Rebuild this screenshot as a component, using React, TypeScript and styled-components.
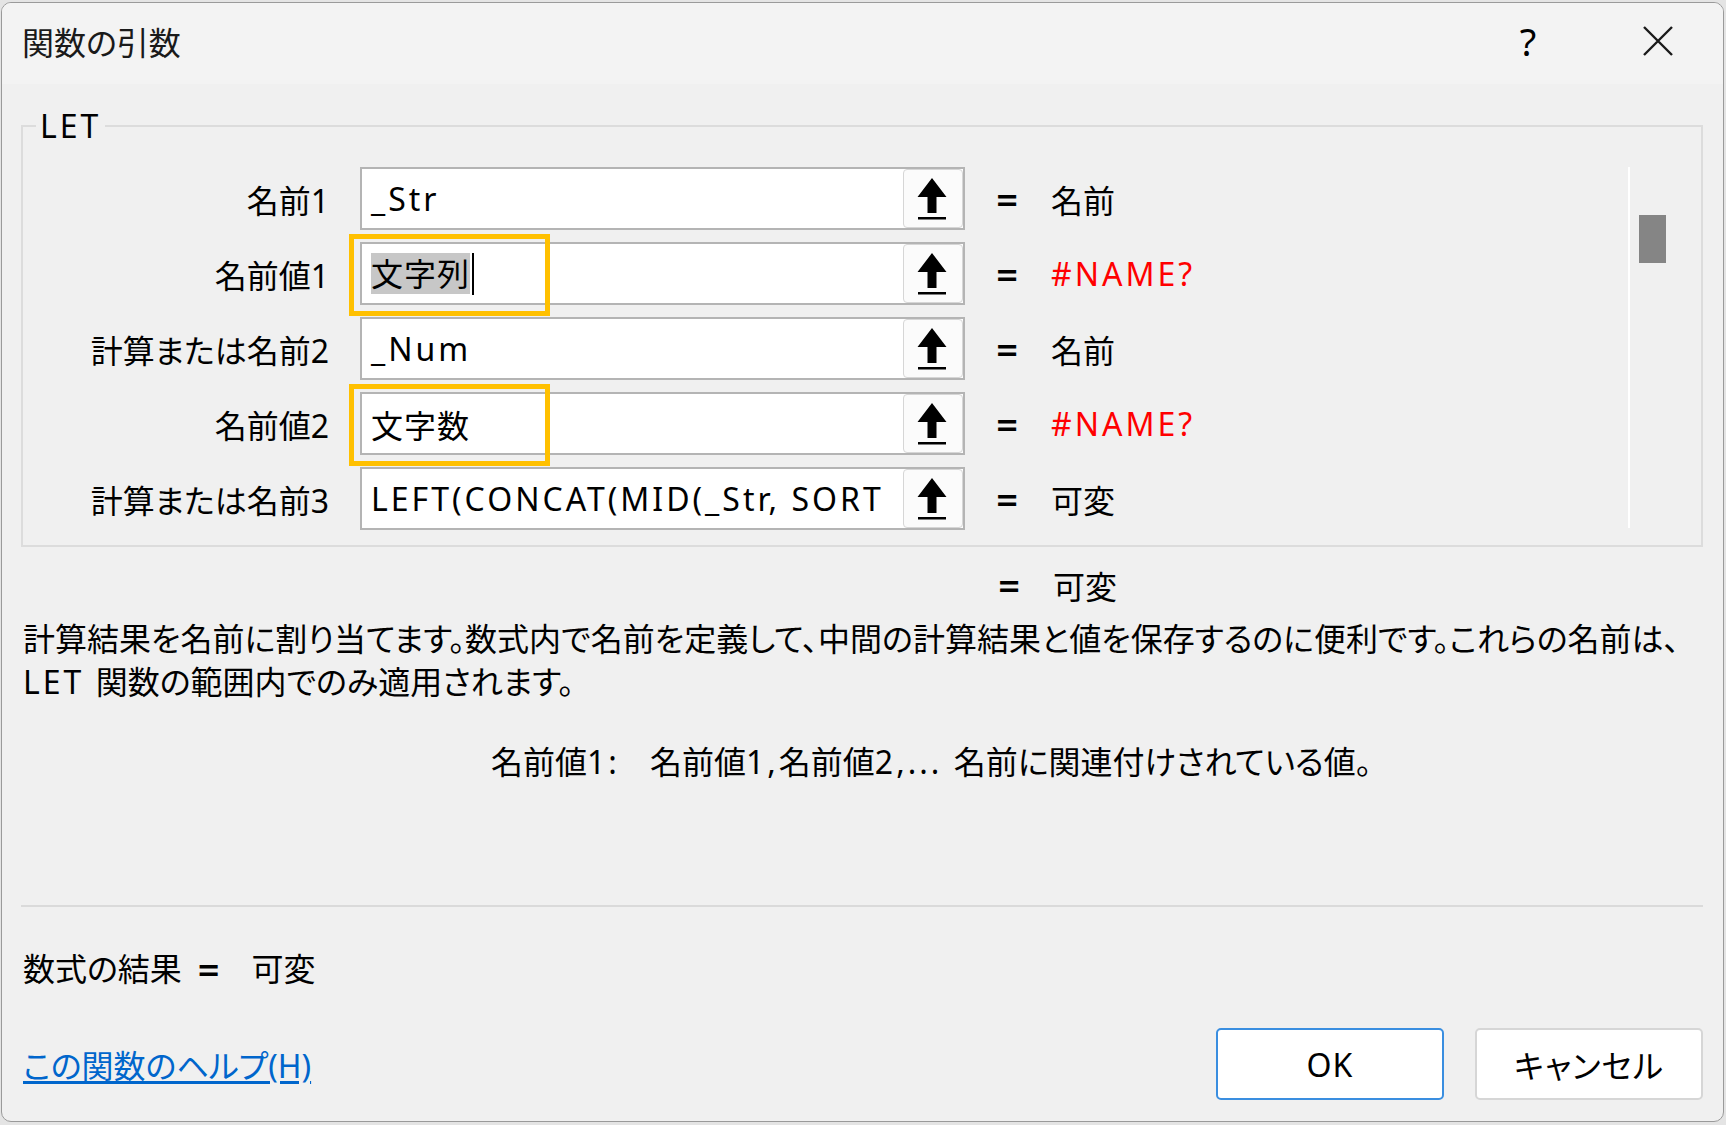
import { Fragment } from 'react'
import styled, { createGlobalStyle } from 'styled-components'

const GlobalStyle = createGlobalStyle`
  html, body {
    margin: 0;
    padding: 0;
    background: #e4e4e4;
  }
  body {
    font-family: "Noto Sans", "Noto Sans CJK JP", sans-serif;
    font-feature-settings: "palt";
    color: #000000;
  }
`

const Dialog = styled.div`
  box-sizing: border-box;
  margin: 2px 2px 3px 1px;
  height: 1120px;
  border: 1px solid #9a9a9a;
  border-radius: 10px;
  overflow: hidden;
  background: #f0f0f0;
  display: flex;
  flex-direction: column;
`

const TitleBar = styled.div`
  height: 81px;
  flex-shrink: 0;
  background: #f3f3f3;
  display: flex;
  align-items: center;
  padding-left: 20px;
`

const Title = styled.div`
  flex: 1;
  font-size: 32px;
  color: #1a1a1a;
  margin-top: -5px;
`

const HelpGlyph = styled.div`
  width: 40px;
  text-align: center;
  font-size: 38px;
  line-height: 1;
  margin-right: 95px;
  margin-top: -6px;
`

const CloseButton = styled.div`
  width: 30px;
  height: 30px;
  margin-right: 50px;
  margin-top: -6px;
  display: flex;
`

const Body = styled.div`
  flex: 1;
  display: flex;
  flex-direction: column;
  padding: 0 20px 0 19px;
`

// latin runs are set wider, like the GDI rendering of Segoe UI
const Lat = styled.span`
  letter-spacing: 3px;
`

const GroupBox = styled.fieldset`
  margin: 24px 0 0 0;
  padding: 17px 0 9px 0;
  border: 2px solid #dcdcdc;
  min-width: 0;
`

const Legend = styled.legend`
  font-size: 32px;
  line-height: 36px;
  padding: 0 4px;
  margin-left: 13px;
  letter-spacing: 3px;
`

const GroupInner = styled.div`
  display: flex;
`

const Rows = styled.div`
  flex: 1;
  display: flex;
  flex-direction: column;
`

const Row = styled.div`
  height: 75px;
  display: flex;
  align-items: center;
`

const Label = styled.div`
  width: 309px;
  text-align: right;
  font-size: 32px;
  white-space: nowrap;
`

const InputBox = styled.div`
  position: relative;
  box-sizing: border-box;
  margin-left: 28px;
  width: 605px;
  height: 63px;
  background: #ffffff;
  border: 2px solid #b4b4b4;
  display: flex;
  align-items: center;
`

const InputText = styled.div<{ $latin?: boolean }>`
  flex: 1;
  overflow: hidden;
  white-space: nowrap;
  padding-left: 9px;
  font-size: 32px;
  letter-spacing: ${p => (p.$latin ? '3px' : '1px')};
  display: flex;
  align-items: center;
`

const Selected = styled.span`
  background: #c7c7c7;
  line-height: 41px;
`

const Caret = styled.span`
  display: inline-block;
  width: 2px;
  height: 42px;
  margin-left: 2px;
  background: #000000;
`

const RefButton = styled.div`
  box-sizing: border-box;
  width: 60px;
  height: 59px;
  flex-shrink: 0;
  background: #fbfbfb;
  border: 1px solid #d6d6d6;
  border-radius: 4px;
  display: flex;
`

const Highlight = styled.div`
  position: absolute;
  left: -13px;
  top: -10px;
  width: 201px;
  height: 82px;
  box-sizing: border-box;
  border: 5px solid #ffc000;
  pointer-events: none;
`

const Eq = styled.div`
  margin-left: 30px;
  width: 24px;
  font-size: 38px;
  font-weight: 600;
  line-height: 1;
  text-align: center;
`

const Value = styled.div<{ $error?: boolean }>`
  margin-left: 32px;
  font-size: 32px;
  color: ${p => (p.$error ? '#ff0000' : '#000000')};
  letter-spacing: ${p => (p.$error ? '3px' : '0')};
`

const ScrollTrack = styled.div`
  width: 62px;
  margin: 6px 0 8px 0;
  border-left: 2px solid #ffffff;
  padding-left: 9px;
`

const Thumb = styled.div`
  width: 27px;
  height: 48px;
  margin-top: 48px;
  background: #858585;
`

const ResultEqLine = styled.div`
  height: 44px;
  margin-top: 16px;
  padding-left: 946px;
  display: flex;
  align-items: center;
`

const Description = styled.div`
  margin-top: 10px;
  padding-left: 2px;
  font-size: 32px;
  line-height: 43px;
  white-space: nowrap;
`

const ParamLine = styled.div`
  margin-top: 37px;
  padding-left: 470px;
  display: flex;
  gap: 30px;
  font-size: 32px;
  line-height: 44px;
  white-space: nowrap;
`

const Bottom = styled.div`
  margin-top: auto;
  display: flex;
  flex-direction: column;
  padding-bottom: 21px;
`

const Separator = styled.div`
  height: 2px;
  background: #dadada;
`

const FormulaResult = styled.div`
  margin-top: 40px;
  padding-left: 2px;
  font-size: 32px;
  line-height: 44px;
  display: flex;
  align-items: center;
`

const ResultEq = styled.span`
  margin-left: 16px;
  font-size: 38px;
  font-weight: 600;
  line-height: 1;
`

const ResultValue = styled.span`
  margin-left: 32px;
`

const Footer = styled.div`
  margin-top: 37px;
  display: flex;
  align-items: center;
`

const HelpLink = styled.a`
  flex: 1;
  padding-left: 2px;
  font-size: 32px;
  color: #0066cc;
  text-decoration: underline;
  text-underline-offset: 3px;
  cursor: pointer;
`

const Button = styled.button<{ $primary?: boolean }>`
  box-sizing: border-box;
  width: 228px;
  height: 72px;
  margin-left: 31px;
  background: #ffffff;
  border: 2px solid ${p => (p.$primary ? '#3a8ee0' : '#d6d6d6')};
  border-radius: 5px;
  font-family: "Noto Sans", "Noto Sans CJK JP", sans-serif;
  font-feature-settings: "palt";
  font-size: 32px;
  letter-spacing: 1px;
  color: #000000;
`

// wrap ascii runs so they get the wider latin spacing
function mixed(text: string) {
  return text.split(/([\x20-\x7e]+)/).map((part, i) =>
    /^[\x20-\x7e]+$/.test(part) ? <Lat key={i}>{part}</Lat> : <Fragment key={i}>{part}</Fragment>
  )
}

function UpArrow() {
  return (
    <svg width="58" height="57" viewBox="0 0 58 57">
      <path d="M28 8 L42.5 27 L32.5 27 L32.5 43 L23.5 43 L23.5 27 L13.5 27 Z" fill="#000" />
      <rect x="14" y="47" width="28" height="2.5" fill="#000" />
    </svg>
  )
}

function CloseIcon() {
  return (
    <svg width="30" height="30" viewBox="0 0 30 30">
      <path d="M1 1 L29 29 M29 1 L1 29" stroke="#1a1a1a" strokeWidth="2.4" />
    </svg>
  )
}

type Arg = {
  label: string
  text: string
  value: string
  latin?: boolean
  error?: boolean
  highlight?: boolean
  selected?: boolean
}

const args: Arg[] = [
  { label: '名前1', text: '_Str', value: '名前', latin: true },
  { label: '名前値1', text: '文字列', value: '#NAME?', error: true, highlight: true, selected: true },
  { label: '計算または名前2', text: '_Num', value: '名前', latin: true },
  { label: '名前値2', text: '文字数', value: '#NAME?', error: true, highlight: true },
  { label: '計算または名前3', text: 'LEFT(CONCAT(MID(_Str, SORT', value: '可変', latin: true },
]

export default function App() {
  return (
    <>
      <GlobalStyle />
      <Dialog>
        <TitleBar>
          <Title>関数の引数</Title>
          <HelpGlyph>?</HelpGlyph>
          <CloseButton>
            <CloseIcon />
          </CloseButton>
        </TitleBar>
        <Body>
          <GroupBox>
            <Legend>LET</Legend>
            <GroupInner>
              <Rows>
                {args.map(a => (
                  <Row key={a.label}>
                    <Label>{mixed(a.label)}</Label>
                    <InputBox>
                      <InputText $latin={a.latin}>
                        {a.selected ? (
                          <>
                            <Selected>{a.text}</Selected>
                            <Caret />
                          </>
                        ) : (
                          a.text
                        )}
                      </InputText>
                      <RefButton>
                        <UpArrow />
                      </RefButton>
                      {a.highlight && <Highlight />}
                    </InputBox>
                    <Eq>=</Eq>
                    <Value $error={a.error}>{a.value}</Value>
                  </Row>
                ))}
              </Rows>
              <ScrollTrack>
                <Thumb />
              </ScrollTrack>
            </GroupInner>
          </GroupBox>
          <ResultEqLine>
            <Eq>=</Eq>
            <Value>可変</Value>
          </ResultEqLine>
          <Description>
            計算結果を名前に割り当てます。数式内で名前を定義して、中間の計算結果と値を保存するのに便利です。これらの名前は、
            <br />
            {mixed('LET 関数の範囲内でのみ適用されます。')}
          </Description>
          <ParamLine>
            <span>{mixed('名前値1:')}</span>
            <span>{mixed('名前値1,名前値2,... 名前に関連付けされている値。')}</span>
          </ParamLine>
          <Bottom>
            <Separator />
            <FormulaResult>
              <span>数式の結果</span>
              <ResultEq>=</ResultEq>
              <ResultValue>可変</ResultValue>
            </FormulaResult>
            <Footer>
              <HelpLink>この関数のヘルプ(H)</HelpLink>
              <Button $primary>OK</Button>
              <Button>キャンセル</Button>
            </Footer>
          </Bottom>
        </Body>
      </Dialog>
    </>
  )
}
